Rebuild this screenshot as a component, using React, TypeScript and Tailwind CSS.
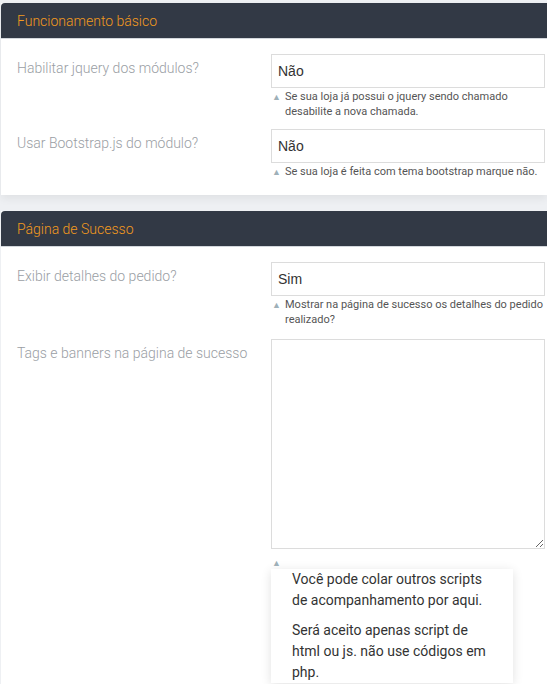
import React from 'react';

type Row = {
  label: string;
  value?: string;
  help: string;
};

function HelpLine({ text }: { text: string }) {
  return (
    <div className="relative mt-[1px] pl-[14px] text-[11px] leading-[15px] text-[#555]">
      <span className="absolute left-[1px] top-[1px] text-[9px] text-[#9fb0b8]">▲</span>
      {text}
    </div>
  );
}

function SelectRow({ row, last }: { row: Row; last?: boolean }) {
  return (
    <div className={`flex ${last ? '' : 'mb-[10px]'}`}>
      <div className="w-[270px] shrink-0 pl-[16px] pt-[4px] text-[14px] leading-[20px] font-light text-[#9a9ea4]">
        {row.label}
      </div>
      <div className="flex-1 pr-[2px]">
        <div className="h-[34px] border border-[#dcdcdc] bg-white px-[6px] flex items-center font-['Liberation_Sans',Arial,sans-serif] text-[14px] text-[#333]">
          {row.value}
        </div>
        <HelpLine text={row.help} />
      </div>
    </div>
  );
}

function CardHeader({ title }: { title: string }) {
  return (
    <div className="h-[36px] bg-[#323945] rounded-tl-[4px] border-b border-[#d3d7dc] flex items-center pl-[16px] pt-[1px] text-[14px] font-light text-[#f39a1e]">
      {title}
    </div>
  );
}

export default function App() {
  const basic: Row[] = [
    {
      label: 'Habilitar jquery dos módulos?',
      value: 'Não',
      help: 'Se sua loja já possui o jquery sendo chamado desabilite a nova chamada.',
    },
    {
      label: 'Usar Bootstrap.js do módulo?',
      value: 'Não',
      help: 'Se sua loja é feita com tema bootstrap marque não.',
    },
  ];

  return (
    <div className="min-h-screen bg-[#eef0f3] pt-[3px] pl-[1px] font-['Roboto',sans-serif] overflow-hidden">
      {/* Funcionamento básico */}
      <div className="bg-white shadow-[0_4px_8px_rgba(0,0,0,0.06)]">
        <CardHeader title="Funcionamento básico" />
        <div className="pt-[15px] pb-[16px]">
          {basic.map((r, i) => (
            <SelectRow key={i} row={r} last={i === basic.length - 1} />
          ))}
        </div>
      </div>

      {/* Página de Sucesso */}
      <div className="mt-[16px] bg-white">
        <CardHeader title="Página de Sucesso" />
        <div className="pt-[15px] pb-[20px]">
          <div className="mb-[12px]">
            <SelectRow
              row={{
                label: 'Exibir detalhes do pedido?',
                value: 'Sim',
                help: 'Mostrar na página de sucesso os detalhes do pedido realizado?',
              }}
              last
            />
          </div>
          <div className="flex">
            <div className="w-[270px] shrink-0 pl-[16px] pt-[4px] text-[14px] leading-[20px] font-light text-[#9a9ea4]">
              Tags e banners na página de sucesso
            </div>
            <div className="flex-1 pr-[2px]">
              <textarea className="block w-full h-[210px] border border-[#dcdcdc] bg-white resize-y" />
              <div className="relative mt-[7px] h-[15px] pl-[14px]">
                <span className="absolute left-[1px] top-[1px] text-[9px] text-[#9fb0b8]">▲</span>
              </div>
              <div className="mt-[-2px] w-[242px] bg-white shadow-[0_2px_10px_rgba(0,0,0,0.12)] px-[21px] text-[14px] leading-[21px] text-[#333]">
                <p>Você pode colar outros scripts de acompanhamento por aqui.</p>
                <p className="mt-[9px]">Será aceito apenas script de html ou js. não use códigos em php.</p>
              </div>
            </div>
          </div>
        </div>
      </div>
    </div>
  );
}
